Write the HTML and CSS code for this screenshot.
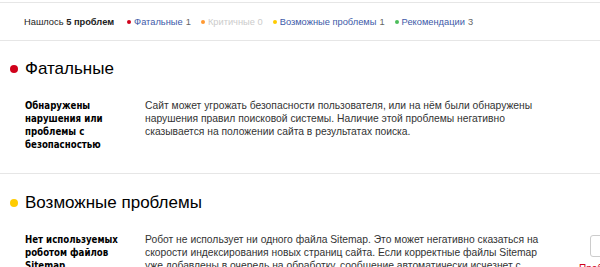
FILE: index.html
```html
<!DOCTYPE html>
<html lang="ru">
<head>
  <meta charset="UTF-8">
  <title>Диагностика сайта</title>
  <link rel="stylesheet" href="styles.css">
</head>
<body>
  <!-- summary bar -->
  <div class="summary">
    <span class="summary-total">Нашлось <b>5 проблем</b></span>
    <span class="summary-item"><i class="dot dot-fatal"></i><a href="#fatal">Фатальные</a> <span class="count">1</span></span>
    <span class="summary-item disabled"><i class="dot dot-critical"></i>Критичные 0</span>
    <span class="summary-item"><i class="dot dot-possible"></i><a href="#possible">Возможные проблемы</a> <span class="count">1</span></span>
    <span class="summary-item"><i class="dot dot-recommend"></i><a href="#recommend">Рекомендации</a> <span class="count">3</span></span>
  </div>

  <div class="group" id="fatal">
    <h2 class="group-title"><i class="dot dot-fatal"></i>Фатальные</h2>
    <div class="problem">
      <div class="problem-name">Обнаружены нарушения или проблемы с безопасностью</div>
      <div class="problem-text">Сайт может угрожать безопасности пользователя, или на нём были обнаружены нарушения правил поисковой системы. Наличие этой проблемы негативно сказывается на положении сайта в результатах поиска.</div>
    </div>
  </div>

  <div class="group" id="possible">
    <h2 class="group-title"><i class="dot dot-possible"></i>Возможные проблемы</h2>
    <div class="problem">
      <div class="problem-name">Нет используемых роботом файлов Sitemap</div>
      <div class="problem-text">Робот не использует ни одного файла Sitemap. Это может негативно сказаться на скорости индексирования новых страниц сайта. Если корректные файлы Sitemap уже добавлены в очередь на обработку, сообщение автоматически исчезнет с течением времени.</div>
      <div class="problem-actions">
        <button class="check-button">Проверить</button>
        <div class="problem-status">Проблема актуальна</div>
      </div>
    </div>
  </div>
</body>
</html>
```
FILE: styles.css
```css
body {
  margin: 0;
  padding-top: 2px;
  font-family: "Liberation Sans", Arial, sans-serif;
  color: #000;
  background-color: white;
  overflow: hidden;
}

.dot {
  display: inline-block;
  border-radius: 50%;
}

.dot-fatal { background-color: #d0021b; }
.dot-critical { background-color: #ff9932; }
.dot-possible { background-color: #fc0; }
.dot-recommend { background-color: #4cbd5b; }

/* summary bar */
.summary {
  display: flex;
  align-items: center;
  height: 37px;
  padding-left: 24px;
  border-top: 1px solid #e6e6e6;
  border-bottom: 1px solid #e6e6e6;
  font-size: 9.3px;
  color: #222;
}

.summary-total {
  margin-right: 13px;
}

.summary-item {
  display: flex;
  align-items: center;
  margin-right: 10px;
}

.summary-item .dot {
  width: 4px;
  height: 4px;
  margin-right: 3px;
}

.summary-item a {
  color: #3d5aa8;
  text-decoration: none;
  margin-right: 3px;
}

.summary-item .count {
  color: #666;
}

.summary-item.disabled {
  color: #ccc;
}

/* problem groups */
.group {
  padding: 18px 0 22px;
}

.group + .group {
  border-top: 1px solid #e6e6e6;
  padding-top: 19px;
}

.group-title {
  display: flex;
  align-items: center;
  margin: 0 0 20px;
  font-size: 17px;
  font-weight: normal;
  line-height: 20px;
}

.group-title .dot {
  width: 8px;
  height: 8px;
  margin: 0 7px 0 10px;
}

.problem {
  display: flex;
  align-items: flex-start;
  line-height: 13px;
}

.problem-name {
  flex-shrink: 0;
  width: 100px;
  margin: 0 20px 0 25px;
  font-family: "DejaVu Sans Condensed", "DejaVu Sans", Verdana, sans-serif;
  font-stretch: condensed;
  font-weight: bold;
  font-size: 9.6px;
}

.problem-text {
  flex-shrink: 0;
  width: 400px;
  color: #333;
  font-size: 10.3px;
}

.problem-actions {
  flex-shrink: 0;
  width: 120px;
  margin-left: 34px;
  margin-top: 2px;
}

.check-button {
  display: block;
  height: 22px;
  margin-left: 11px;
  padding: 0 12px;
  background-color: white;
  border: 1px solid #ccc;
  border-radius: 3px;
  font-family: inherit;
  font-size: 11px;
}

.problem-status {
  margin-top: 5px;
  color: #d0021b;
  font-size: 10px;
}
```
